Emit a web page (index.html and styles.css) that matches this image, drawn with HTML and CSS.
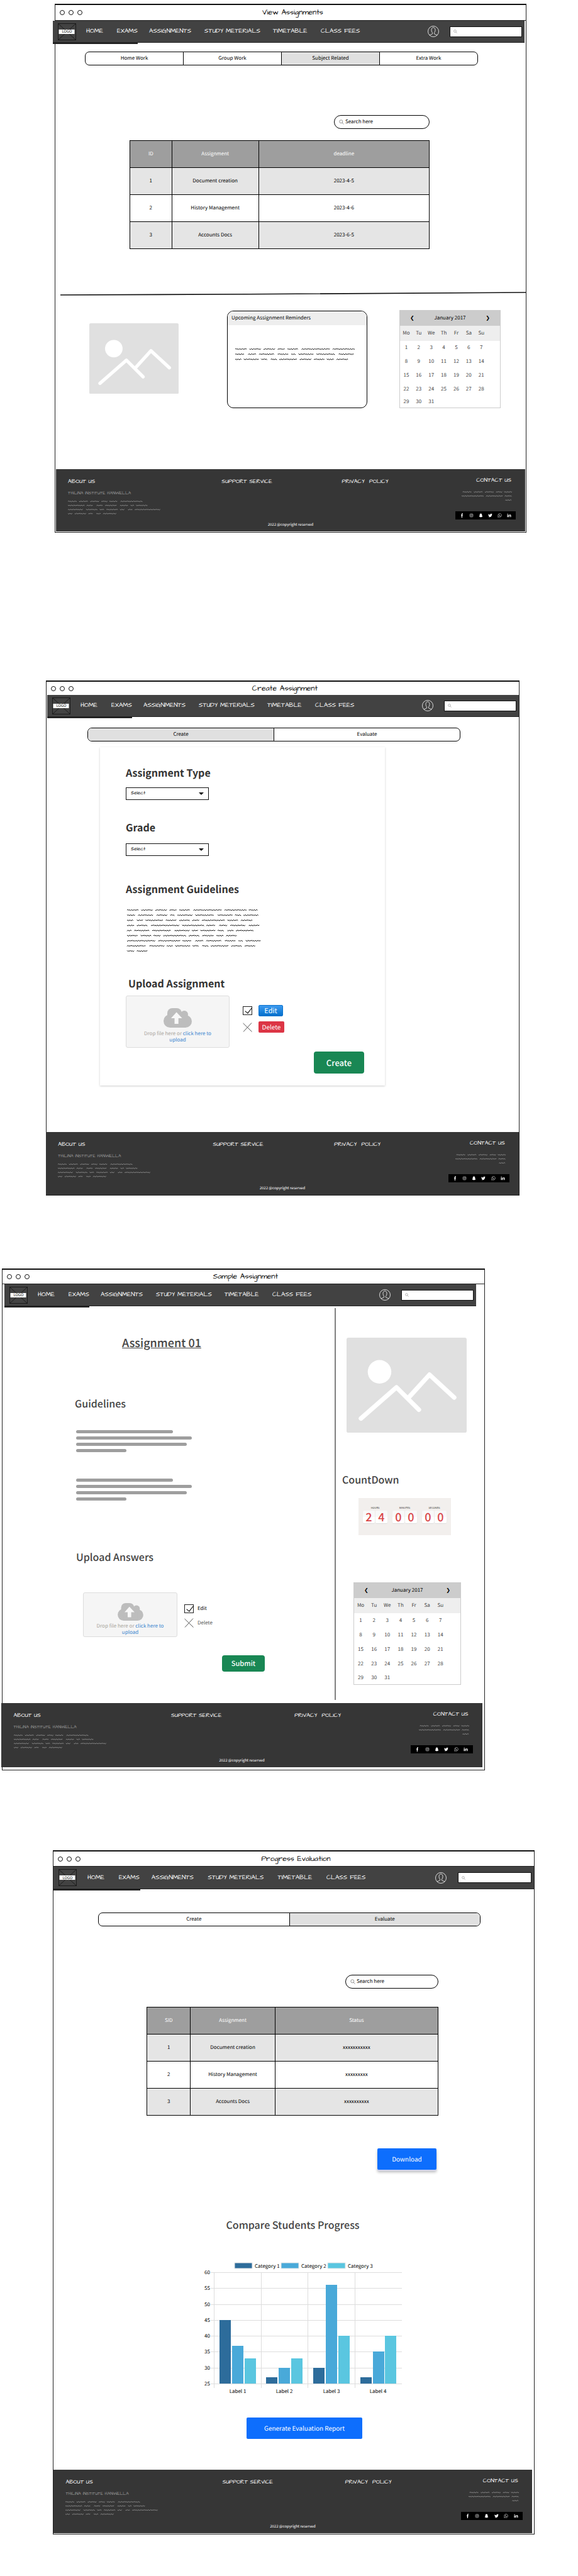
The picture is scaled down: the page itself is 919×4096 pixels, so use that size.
FILE: index.html
```html
<!DOCTYPE html>
<html lang="en">
<head>
<meta charset="utf-8">
<meta name="viewport" content="width=device-width, initial-scale=1">
<title>Assignments</title>
<link rel="stylesheet" href="styles.css">
</head>
<body>
<svg class="sprite" aria-hidden="true">
  <symbol id="i-search" viewBox="0 0 16 16"><circle cx="6.5" cy="6.5" r="5"/><path d="M10 10l5 5.5"/></symbol>
  <symbol id="i-user" viewBox="0 0 36 36"><circle cx="18" cy="18" r="17"/><path d="M6 30c3-3 9-2 9.500-6 0-2-3-4-3.500-9-.4-6 2-9.500 6-9.500s6.400 3.500 6 9.500c-.5 5-3.500 7-3.500 9 .5 4 6.500 3 9.500 6"/></symbol>
  <symbol id="i-photo" viewBox="0 0 510 404"><rect width="510" height="404" rx="8" fill="#e0e0e0"/><circle cx="140" cy="145" r="50" fill="#fff"/><path d="M61 343L212 211L307 306M263 255L352 157L457 254" fill="none" stroke="#fff" stroke-width="19" stroke-linecap="round" stroke-linejoin="round"/></symbol>
  <symbol id="i-cloud" viewBox="0 0 45 31"><g fill="#bdbdbd"><circle cx="10.500" cy="20.500" r="10.500"/><circle cx="35" cy="21" r="10"/><rect x="10" y="11" width="25" height="20"/><rect x="6" y="0" width="23" height="24" rx="8"/><circle cx="33" cy="10" r="6"/></g><path d="M20.600 6.500L29.600 16H23.700V25H17.500V16H12z" fill="#f8f8f8"/></symbol>
  <symbol id="i-logo" viewBox="0 0 29 27"><path d="M.5.5h28v26h-28zM.5.500l28 26M28.500.500l-28 26" fill="none" stroke="#111" stroke-width=".8"/><rect x="1.500" y="10" width="25" height="7" fill="#fff"/></symbol>
  <symbol id="i-cross" viewBox="0 0 15 15"><path d="M.5 1L14.500 14.500M14 .5L1 14.500"/></symbol>
  <symbol id="i-fb" viewBox="0 0 10 10"><path d="M4 10V5.500H2.800V3.800H4V2.500C4 1 4.700.2 6 .2h1.200v1.700h-.7c-.6 0-.7.3-.7.8v1.100h1.400L7 5.500H5.800V10z"/></symbol>
  <symbol id="i-ig" viewBox="0 0 10 10"><g fill="none" stroke="#fff" stroke-width=".8"><rect x="1.500" y="1.500" width="7" height="7" rx="1.800"/><circle cx="5" cy="5" r="1.700"/></g><circle cx="7.100" cy="3" r=".5"/></symbol>
  <symbol id="i-snap" viewBox="0 0 10 10"><path d="M5 .7c1.600 0 2.500 1 2.500 2.500v1.500l1 .3-.9.8c.3.800.8 1.300 1.600 1.600-.3.500-1 .5-1.300.7-.2.400-.5.400-1 .4-.6 0-1 .7-1.900.7s-1.300-.7-1.900-.7c-.5 0-.8 0-1-.4C1.800 7.900 1.100 7.900.8 7.400c.8-.3 1.300-.8 1.600-1.600L1.500 5l1-.3V3.200C2.500 1.700 3.400.7 5 .7z"/></symbol>
  <symbol id="i-tw" viewBox="0 0 10 10"><path d="M9.600 2.300l-1 1C8.700 6.700 6.200 9 3.400 9 2.200 9 1.200 8.700.4 8.200c1 .1 2-.2 2.700-.8-.8 0-1.500-.6-1.700-1.300h.8C1.300 5.800.6 5.100.6 4.100l.9.200C.6 3.700.4 2.600.9 1.700c1 1.200 2.400 1.900 4 2C4.600 2.300 5.600 1.200 6.900 1.200c.5 0 1 .2 1.400.6l1.200-.5-.8 1z"/></symbol>
  <symbol id="i-wa" viewBox="0 0 10 10"><path d="M1 9l.6-2.200A4 4 0 1 1 3.200 8.400z" fill="none" stroke="#fff" stroke-width=".8"/><path d="M3.600 2.900c-.8.8-.3 2 .8 3s2.200 1.300 2.800.4l-.9-.7-.5.4c-.6-.2-1.200-.8-1.400-1.400l.4-.4z"/></symbol>
  <symbol id="i-in" viewBox="0 0 10 10"><path d="M.7 3.500h1.800V9H.7zM3.600 3.500h1.700v.8C6.300 2.900 9.300 2.800 9.300 5.500V9H7.500V6C7.500 4.300 5.400 4.400 5.400 6v3H3.600z"/><circle cx="1.600" cy="1.900" r="1"/></symbol>
</svg>

<main>
<section class="screen screen-view">
  <header class="titlebar"><span class="dots"><i></i><i></i><i></i></span><h1>View Assignments</h1></header>
  <nav class="nav">
    <a class="logo" href="#"><svg><use href="#i-logo"/></svg><span>LOGO</span></a>
    <a href="#">HOME</a><a href="#">EXAMS</a><a href="#">ASSIGNMENTS</a><a href="#">STUDY METERIALS</a><a href="#">TIMETABLE</a><a href="#">CLASS FEES</a>
    <a class="user" href="#" aria-label="Profile"><svg><use href="#i-user"/></svg></a>
    <label class="nav-search"><svg><use href="#i-search"/></svg><input type="search" aria-label="Search site"></label>
  </nav>
  <div class="tabs"><button>Home Work</button><button>Group Work</button><button class="on">Subject Related</button><button>Extra Work</button></div>
  <label class="search"><svg><use href="#i-search"/></svg><input type="search" placeholder="Search here" aria-label="Search assignments"></label>
  <table class="data">
    <thead><tr><th>ID</th><th>Assignment</th><th>deadline</th></tr></thead>
    <tbody>
      <tr><td>1</td><td>Document creation</td><td>2023-4-5</td></tr>
      <tr><td>2</td><td>History Management</td><td>2023-4-6</td></tr>
      <tr><td>3</td><td>Accounts Docs</td><td>2023-6-5</td></tr>
    </tbody>
  </table>
  <svg class="rule" viewBox="0 0 741 6" preserveAspectRatio="none"><path d="M0 5L300 3.800L741 1" fill="none" stroke="#111" stroke-width="1.600"/></svg>
  <div class="trio">
    <svg class="photo" viewBox="0 0 510 404"><use href="#i-photo"/></svg>
    <article class="reminders">
      <h2>Upcoming Assignment Reminders</h2>
      <svg class="scribble" data-lines="19 19 19 12 17 | 46 35 / 15 | 14 24 | 18 8 25 30 | 24 / 10 24 10 | 10 29 19 17 12 19"></svg>
    </article>
    <table class="calendar">
      <thead>
        <tr class="month"><th colspan="8"><div><button aria-label="Previous month">❮</button><span>January 2017</span><button aria-label="Next month">❯</button></div></th></tr>
        <tr class="week"><th>Mo</th><th>Tu</th><th>We</th><th>Th</th><th>Fr</th><th>Sa</th><th>Su</th><th class="pad"></th></tr>
      </thead>
      <tbody>
        <tr><td>1</td><td>2</td><td>3</td><td>4</td><td>5</td><td>6</td><td>7</td></tr>
        <tr><td>8</td><td>9</td><td>10</td><td>11</td><td>12</td><td>13</td><td>14</td></tr>
        <tr><td>15</td><td>16</td><td>17</td><td>18</td><td>19</td><td>20</td><td>21</td></tr>
        <tr><td>22</td><td>23</td><td>24</td><td>25</td><td>26</td><td>27</td><td>28</td></tr>
        <tr><td>29</td><td>30</td><td>31</td></tr>
      </tbody>
    </table>
  </div>
  <footer class="footer">
    <div class="about"><h3>ABOUT US</h3><p>THILINA INSTITUTE HANWELLA</p><svg class="scribble small" data-lines="15 15 15 10 13 | 36 / 27 11 | 11 19 | 14 6 19 / 24 | 19 8 19 8 | 8 41 / 8 19 8 | 8 22"></svg></div>
    <a class="support" href="#">SUPPORT SERVICE</a>
    <a class="privacy" href="#">PRIVACY&nbsp; POLICY</a>
    <div class="contact"><h3>CONTACT US</h3><svg class="scribble small end" data-lines="15 15 15 10 13 / 36 27 12 / 11"></svg>
      <div class="social"><a href="#" aria-label="Facebook"><svg><use href="#i-fb"/></svg></a><a href="#" aria-label="Instagram"><svg><use href="#i-ig"/></svg></a><a href="#" aria-label="Snapchat"><svg><use href="#i-snap"/></svg></a><a href="#" aria-label="Twitter"><svg><use href="#i-tw"/></svg></a><a href="#" aria-label="WhatsApp"><svg><use href="#i-wa"/></svg></a><a href="#" aria-label="LinkedIn"><svg><use href="#i-in"/></svg></a></div></div>
    <small>2022 @copyright reserved</small>
  </footer>
</section>

<section class="screen screen-create">
  <header class="titlebar"><span class="dots"><i></i><i></i><i></i></span><h1>Create Assignment</h1></header>
  <nav class="nav">
    <a class="logo" href="#"><svg><use href="#i-logo"/></svg><span>LOGO</span></a>
    <a href="#">HOME</a><a href="#">EXAMS</a><a href="#">ASSIGNMENTS</a><a href="#">STUDY METERIALS</a><a href="#">TIMETABLE</a><a href="#">CLASS FEES</a>
    <a class="user" href="#" aria-label="Profile"><svg><use href="#i-user"/></svg></a>
    <label class="nav-search"><svg><use href="#i-search"/></svg><input type="search" aria-label="Search site"></label>
  </nav>
  <div class="tabs"><button class="on">Create</button><button>Evaluate</button></div>
  <form class="form-card">
    <label class="form-title" for="type">Assignment Type</label>
    <div class="select"><select id="type"><option>Select</option></select></div>
    <label class="form-title second" for="grade">Grade</label>
    <div class="select"><select id="grade"><option>Select</option></select></div>
    <h2 class="form-title third">Assignment Guidelines</h2>
    <svg class="scribble" data-lines="19 19 19 12 17 | 46 35 15 / 14 24 | 18 8 25 30 | 24 10 24 / 10 | 10 29 18 17 12 37 18 19 / 12 17 | 46 35 15 | 14 24 | 17 / 8 25 30 | 24 10 24 10 | 10 29 / 18 17 12 37 18 19 12 17 / 46 35 15 | 14 24 | 18 8 25 / 30 | 24 10 24 10 | 10 29 18 17 / 12 18"></svg>
    <h2 class="form-title fourth">Upload Assignment</h2>
    <div class="upload">
      <div class="drop"><svg><use href="#i-cloud"/></svg><p>Drop file here or <a href="#">click here to upload</a></p></div>
      <div class="upload-actions">
        <div><input type="checkbox" checked aria-label="Edit file"><button type="button" class="edit">Edit</button></div>
        <div><svg class="cross"><use href="#i-cross"/></svg><button type="button" class="delete">Delete</button></div>
      </div>
    </div>
    <button type="button" class="primary">Create</button>
  </form>
  <footer class="footer">
    <div class="about"><h3>ABOUT US</h3><p>THILINA INSTITUTE HANWELLA</p><svg class="scribble small" data-lines="15 15 15 10 13 | 36 / 27 11 | 11 19 | 14 6 19 / 24 | 19 8 19 8 | 8 41 / 8 19 8 | 8 22"></svg></div>
    <a class="support" href="#">SUPPORT SERVICE</a>
    <a class="privacy" href="#">PRIVACY&nbsp; POLICY</a>
    <div class="contact"><h3>CONTACT US</h3><svg class="scribble small end" data-lines="15 15 15 10 13 / 36 27 12 / 11"></svg>
      <div class="social"><a href="#" aria-label="Facebook"><svg><use href="#i-fb"/></svg></a><a href="#" aria-label="Instagram"><svg><use href="#i-ig"/></svg></a><a href="#" aria-label="Snapchat"><svg><use href="#i-snap"/></svg></a><a href="#" aria-label="Twitter"><svg><use href="#i-tw"/></svg></a><a href="#" aria-label="WhatsApp"><svg><use href="#i-wa"/></svg></a><a href="#" aria-label="LinkedIn"><svg><use href="#i-in"/></svg></a></div></div>
    <small>2022 @copyright reserved</small>
  </footer>
</section>

<section class="screen screen-sample">
  <header class="titlebar"><span class="dots"><i></i><i></i><i></i></span><h1>Sample Assignment</h1></header>
  <nav class="nav">
    <a class="logo" href="#"><svg><use href="#i-logo"/></svg><span>LOGO</span></a>
    <a href="#">HOME</a><a href="#">EXAMS</a><a href="#">ASSIGNMENTS</a><a href="#">STUDY METERIALS</a><a href="#">TIMETABLE</a><a href="#">CLASS FEES</a>
    <a class="user" href="#" aria-label="Profile"><svg><use href="#i-user"/></svg></a>
    <label class="nav-search"><svg><use href="#i-search"/></svg><input type="search" aria-label="Search site"></label>
  </nav>
  <div class="split">
    <div class="work">
      <h2 class="work-name">Assignment 01</h2>
      <h3 class="work-title">Guidelines</h3>
      <div class="bars"><i></i><i></i><i></i><i></i></div>
      <div class="bars"><i></i><i></i><i></i><i></i></div>
      <h3 class="work-title answers">Upload Answers</h3>
      <div class="upload">
        <div class="drop"><svg><use href="#i-cloud"/></svg><p>Drop file here or <a href="#">click here to upload</a></p></div>
        <div class="upload-actions plain">
          <label><input type="checkbox" checked>Edit</label>
          <button type="button"><svg class="cross"><use href="#i-cross"/></svg>Delete</button>
        </div>
      </div>
      <button type="button" class="primary">Submit</button>
    </div>
    <aside class="side">
      <svg class="photo" viewBox="0 0 510 404"><use href="#i-photo"/></svg>
      <h3 class="work-title">CountDown</h3>
      <div class="counter">
        <div><span>HOURS</span><b>2</b><b>4</b></div>
        <div><span>MINUTES</span><b>0</b><b>0</b></div>
        <div><span>SECONDS</span><b>0</b><b>0</b></div>
      </div>
      <table class="calendar">
        <thead>
          <tr class="month"><th colspan="8"><div><button aria-label="Previous month">❮</button><span>January 2017</span><button aria-label="Next month">❯</button></div></th></tr>
          <tr class="week"><th>Mo</th><th>Tu</th><th>We</th><th>Th</th><th>Fr</th><th>Sa</th><th>Su</th><th class="pad"></th></tr>
        </thead>
        <tbody>
          <tr><td>1</td><td>2</td><td>3</td><td>4</td><td>5</td><td>6</td><td>7</td></tr>
          <tr><td>8</td><td>9</td><td>10</td><td>11</td><td>12</td><td>13</td><td>14</td></tr>
          <tr><td>15</td><td>16</td><td>17</td><td>18</td><td>19</td><td>20</td><td>21</td></tr>
          <tr><td>22</td><td>23</td><td>24</td><td>25</td><td>26</td><td>27</td><td>28</td></tr>
          <tr><td>29</td><td>30</td><td>31</td></tr>
        </tbody>
      </table>
    </aside>
  </div>
  <footer class="footer">
    <div class="about"><h3>ABOUT US</h3><p>THILINA INSTITUTE HANWELLA</p><svg class="scribble small" data-lines="15 15 15 10 13 | 36 / 27 11 | 11 19 | 14 6 19 / 24 | 19 8 19 8 | 8 41 / 8 19 8 | 8 22"></svg></div>
    <a class="support" href="#">SUPPORT SERVICE</a>
    <a class="privacy" href="#">PRIVACY&nbsp; POLICY</a>
    <div class="contact"><h3>CONTACT US</h3><svg class="scribble small end" data-lines="15 15 15 10 13 / 36 27 12 / 11"></svg>
      <div class="social"><a href="#" aria-label="Facebook"><svg><use href="#i-fb"/></svg></a><a href="#" aria-label="Instagram"><svg><use href="#i-ig"/></svg></a><a href="#" aria-label="Snapchat"><svg><use href="#i-snap"/></svg></a><a href="#" aria-label="Twitter"><svg><use href="#i-tw"/></svg></a><a href="#" aria-label="WhatsApp"><svg><use href="#i-wa"/></svg></a><a href="#" aria-label="LinkedIn"><svg><use href="#i-in"/></svg></a></div></div>
    <small>2022 @copyright reserved</small>
  </footer>
</section>

<section class="screen screen-progress">
  <header class="titlebar"><span class="dots"><i></i><i></i><i></i></span><h1>Progress Evaluation</h1></header>
  <nav class="nav">
    <a class="logo" href="#"><svg><use href="#i-logo"/></svg><span>LOGO</span></a>
    <a href="#">HOME</a><a href="#">EXAMS</a><a href="#">ASSIGNMENTS</a><a href="#">STUDY METERIALS</a><a href="#">TIMETABLE</a><a href="#">CLASS FEES</a>
    <a class="user" href="#" aria-label="Profile"><svg><use href="#i-user"/></svg></a>
    <label class="nav-search"><svg><use href="#i-search"/></svg><input type="search" aria-label="Search site"></label>
  </nav>
  <div class="tabs"><button>Create</button><button class="on">Evaluate</button></div>
  <label class="search"><svg><use href="#i-search"/></svg><input type="search" placeholder="Search here" aria-label="Search progress"></label>
  <table class="data">
    <thead><tr><th>SID</th><th>Assignment</th><th>Status</th></tr></thead>
    <tbody>
      <tr><td>1</td><td>Document creation</td><td>xxxxxxxxxxx</td></tr>
      <tr><td>2</td><td>History Management</td><td>xxxxxxxxx</td></tr>
      <tr><td>3</td><td>Accounts Docs</td><td>xxxxxxxxxx</td></tr>
    </tbody>
  </table>
  <button class="download">Download</button>
  <h2 class="compare">Compare Students Progress</h2>
  <svg class="chart" viewBox="0 0 316 212" role="img" aria-label="Students progress by category">
    <g stroke="#e8e8e8"><rect x="49" y="2" width="28" height="9" fill="#2d6c9b"/><rect x="123" y="2" width="28" height="9" fill="#49a9d9"/><rect x="197" y="2" width="28" height="9" fill="#5ac6e0"/></g>
    <g class="legend"><text x="81" y="10">Category 1</text><text x="155" y="10">Category 2</text><text x="229" y="10">Category 3</text></g>
    <path d="M11 17.500H315M11 42.500H315M11 68.500H315M11 93.500H315M11 118.500H315M11 143.500H315M11 169.500H315M11 194.500H315M16.500 17V201M91.500 17V201M165.500 17V201M240.500 17V201" stroke="#ddd" fill="none"/>
    <g fill="#2d6c9b"><rect x="25" y="93" width="18" height="101"/><rect x="99" y="184" width="18" height="10"/><rect x="174" y="169" width="18" height="25"/><rect x="249" y="184" width="18" height="10"/></g>
    <g fill="#49a9d9"><rect x="45" y="134" width="18" height="60"/><rect x="119" y="169" width="18" height="25"/><rect x="194" y="37" width="18" height="157"/><rect x="269" y="143" width="18" height="51"/></g>
    <g fill="#5ac6e0"><rect x="65" y="154" width="18" height="40"/><rect x="139" y="154" width="18" height="40"/><rect x="214" y="118" width="18" height="76"/><rect x="288" y="118" width="18" height="76"/></g>
    <g class="ticks"><text x="10" y="20">60</text><text x="10" y="45">55</text><text x="10" y="71">50</text><text x="10" y="96">45</text><text x="10" y="121">40</text><text x="10" y="146">35</text><text x="10" y="172">30</text><text x="10" y="197">25</text></g>
    <g class="labels"><text x="54" y="209">Label 1</text><text x="128" y="209">Label 2</text><text x="203" y="209">Label 3</text><text x="277" y="209">Label 4</text></g>
  </svg>
  <button class="report">Generate Evaluation Report</button>
  <footer class="footer">
    <div class="about"><h3>ABOUT US</h3><p>THILINA INSTITUTE HANWELLA</p><svg class="scribble small" data-lines="15 15 15 10 13 | 36 / 27 11 | 11 19 | 14 6 19 / 24 | 19 8 19 8 | 8 41 / 8 19 8 | 8 22"></svg></div>
    <a class="support" href="#">SUPPORT SERVICE</a>
    <a class="privacy" href="#">PRIVACY&nbsp; POLICY</a>
    <div class="contact"><h3>CONTACT US</h3><svg class="scribble small end" data-lines="15 15 15 10 13 / 36 27 12 / 11"></svg>
      <div class="social"><a href="#" aria-label="Facebook"><svg><use href="#i-fb"/></svg></a><a href="#" aria-label="Instagram"><svg><use href="#i-ig"/></svg></a><a href="#" aria-label="Snapchat"><svg><use href="#i-snap"/></svg></a><a href="#" aria-label="Twitter"><svg><use href="#i-tw"/></svg></a><a href="#" aria-label="WhatsApp"><svg><use href="#i-wa"/></svg></a><a href="#" aria-label="LinkedIn"><svg><use href="#i-in"/></svg></a></div></div>
    <small>2022 @copyright reserved</small>
  </footer>
</section>
</main>
<script src="script.js"></script>
</body>
</html>
```
FILE: styles.css
```css
:root {
  --hand: "Architects Daughter", Lato, sans-serif;
  --body: "Noto Sans CJK SC", "Noto Sans", sans-serif;
  --dark: #424242;
}
* { box-sizing: border-box; }
body {
  margin: 0;
  padding: 6px 0 67px;
  background: #fff;
  color: #000;
  font: 8px/12px var(--body);
  text-rendering: geometricPrecision;
}
h1, h2, h3, p { margin: 0; font-weight: 400; }
a { color: inherit; text-decoration: none; }
button, input, select {
  margin: 0;
  padding: 0;
  border: 0;
  background: none;
  color: inherit;
  font: inherit;
  text-rendering: inherit;
}
svg { display: block; }
.sprite { position: absolute; width: 0; height: 0; }

/* Window frames */
.screen { border: 1px solid #222; border-top: 2px solid #111; }
.screen-view { margin: 0 82px 0 87px; padding-bottom: 1px; }
.screen-create { margin: 235px 93px 0 73px; }
.screen-sample { margin: 116px 148px 0 3px; padding-bottom: 4px; }
.screen-progress { margin: 127px 69px 0 84px; padding-bottom: 1px; }

.titlebar {
  display: grid;
  grid-template-columns: 60px 1fr 60px;
  align-items: center;
  height: 25px;
  padding-left: 7px;
  border-bottom: 1px solid #222;
}
.screen-create .titlebar { height: 21px; border: 0; }
.screen-sample .titlebar { height: 23px; }
.screen-progress .titlebar { height: 24px; }
.titlebar h1 { font: 12px/16px var(--hand); text-align: center; }
.dots { display: flex; gap: 6px; }
.dots i { width: 8px; height: 8px; border: 1px solid #111; border-radius: 50%; }

/* Navigation */
.nav {
  position: relative;
  display: grid;
  grid-template-columns: 53fr 49fr 51fr 88fr 109fr 76fr 170fr 35fr 115fr 4fr;
  align-items: center;
  height: 35px;
  background: var(--dark);
  border-bottom: 1px solid #222;
  color: #fff;
  font: 10px/12px var(--hand);
  white-space: nowrap;
}
.nav > * { min-width: 0; }
.nav::after {
  content: "";
  position: absolute;
  left: 0;
  top: 100%;
  width: 18%;
  height: 3px;
  background: #222;
}
.screen-view .nav { margin: 0 2px 0 -4px; }
.screen-create .nav { margin: 0 0 0 1px; }
.screen-sample .nav { margin: 0 13px 0 3px; }
.screen-progress .nav { height: 36px; }
.logo { display: grid; align-items: center; width: 29px; margin-left: 8px; }
.logo > * { grid-area: 1 / 1; }
.logo svg { width: 29px; height: 27px; }
.logo span { color: #111; font: 6px/8px var(--body); text-align: center; }
.user svg { width: 18px; height: 18px; fill: none; stroke: #fff; stroke-width: 1.6px; }
.nav-search {
  display: flex;
  align-items: center;
  height: 17px;
  padding-left: 5px;
  background: #fff;
  border: 1px solid #111;
}
.nav-search svg { flex: none; width: 6px; height: 6px; fill: none; stroke: #444; }
.nav-search input, .search input { flex: 1; min-width: 0; outline: 0; }

/* Segmented tabs */
.tabs {
  display: flex;
  height: 22px;
  border: 1px solid #000;
  border-radius: 7px;
  overflow: hidden;
}
.tabs button { flex: 1; }
.tabs button + button { border-left: 1px solid #000; }
.tabs .on { background: #e0e0e0; }
.screen-view .tabs { margin: 14px 76px 0 47px; }
.screen-create .tabs { margin: 17px 93px 0 65px; }
.screen-progress .tabs { margin: 37px 85px 0 71px; }

.search {
  display: flex;
  align-items: center;
  gap: 2px;
  width: 152px;
  height: 22px;
  margin: 79px 153px 0 auto;
  padding: 0 7px;
  border: 1px solid #000;
  border-radius: 11px;
}
.search svg { width: 8px; height: 8px; fill: none; stroke: #333; }
.search input::placeholder { color: #000; opacity: 1; }
.screen-progress .search { width: 148px; margin: 77px 152px 0 auto; }

/* Data tables */
.data {
  width: calc(100% - 271px);
  margin: 18px 153px 0 118px;
  border-collapse: collapse;
  table-layout: fixed;
}
.data th, .data td { height: 43px; border: 1px solid #000; padding: 0; text-align: center; font-weight: 400; }
.data th { background: #9e9e9e; color: #fff; }
.data th:first-child { width: 14%; }
.data th:nth-child(2) { width: 29%; }
.data tbody tr:nth-child(odd) { background: #e5e5e5; }
.screen-progress .data { width: calc(100% - 300px); margin: 29px 152px 0 148px; }
.screen-progress .data th:first-child { width: 15%; }

.rule { width: calc(100% - 8px); height: 6px; margin: 68px 0 0 8px; }

.trio {
  display: grid;
  grid-template-columns: 54fr 142fr 77fr 223fr 51fr 161fr 40fr;
  align-items: start;
  margin-top: 23px;
}
.trio .photo { grid-column: 2; width: 100%; margin-top: 21px; }
.reminders {
  grid-column: 4;
  height: 155px;
  margin-top: 1px;
  border: 1px solid #000;
  border-radius: 10px;
  overflow: hidden;
}
.reminders h2 { padding: 5px 6px; background: #eee; font-size: 8px; line-height: 12px; }
.reminders .scribble { margin: 34px 0 0 12px; }
.trio .calendar { grid-column: 6; }

/* Calendar */
.calendar {
  width: 100%;
  border: 1px solid #ccc;
  border-spacing: 0;
  table-layout: fixed;
  color: #444;
}
.calendar th, .calendar td { height: 22px; padding: 0; text-align: center; font-weight: 400; }
.calendar tbody tr:last-child td { height: 18px; }
.calendar .month th { height: 24px; background: #ccc; color: #000; }
.calendar .month div { display: flex; justify-content: space-between; padding: 0 16px; }
.calendar .week th { height: 24px; background: #eee; }
.calendar .week .pad { width: 5%; }
.side .calendar { width: calc(100% - 65px); margin: 75px 37px 0 28px; }
.side .calendar td { height: 23px; }
.side .calendar tbody tr:last-child td { height: 21px; }

/* Scribbled filler lines */
.scribble { fill: none; stroke: #111; stroke-width: 1px; stroke-linejoin: round; overflow: visible; }
.scribble.small { stroke: #aaa; stroke-width: .7px; }

/* Footer */
.footer {
  display: grid;
  grid-template-columns: 19fr 244fr 191fr 180fr 96fr 15fr;
  min-height: 99px;
  padding: 14px 0 7px;
  background: #363636;
  color: #fff;
  font: 9px/12px var(--hand);
  white-space: nowrap;
}
.footer > * { grid-row: 1; min-width: 0; }
.footer h3 { font-size: 9px; line-height: 12px; }
.about { grid-column: 2; }
.about p { margin: 7px 0 5px; color: #999; font-size: 7px; line-height: 10px; }
.support { grid-column: 3; }
.privacy { grid-column: 4; }
.contact { grid-column: 5; text-align: right; }
.contact h3 { margin: -2px 7px 9px 0; }
.contact .scribble { margin: 0 5px 0 auto; }
.social {
  display: flex;
  align-items: center;
  justify-content: space-around;
  height: 13px;
  margin-top: 15px;
  padding: 0 3px;
  background: #000;
}
.social svg { width: 7px; height: 7px; fill: #fff; }
.footer small { grid-column: 1 / -1; align-self: end; font: 6px/8px var(--body); text-align: center; }
.screen-view .footer { margin: 97px 1px 0; }
.screen-create .footer { margin: 74px 0 0 -1px; min-height: 100px; }
.screen-sample .footer { margin: 5px 3px 0 -2px; min-height: 102px; }
.screen-progress .footer { margin: 49px 3px 0 0; min-height: 101px; }

/* Create form */
.form-card {
  display: flex;
  flex-direction: column;
  align-items: flex-start;
  margin: 9px 213px 0 85px;
  padding: 30px 33px 19px 41px;
  box-shadow: 0 1px 3px #ccc;
}
.form-title { color: #333; font-size: 16px; font-weight: 700; line-height: 20px; }
.second { margin-top: 33px; }
.third { margin-top: 42px; }
.fourth { margin: 37px 0 10px 4px; }
.select {
  display: flex;
  align-items: center;
  width: 132px;
  height: 20px;
  margin-top: 14px;
  padding: 0 7px;
  border: 1px solid #111;
}
.select select { flex: 1; appearance: none; font: 8px/12px var(--hand); }
.select::after { content: ""; border: 4px solid transparent; border-top: 4px solid #111; border-bottom: 0; }
.second + .select { margin-top: 16px; }
.form-card .scribble { margin: 20px 0 0 2px; }
.form-card .primary { width: 80px; height: 35px; margin: 6px 0 0 auto; font-size: 13px; }

.upload { display: flex; gap: 21px; }
.drop {
  display: flex;
  flex-direction: column;
  align-items: center;
  width: 165px;
  height: 83px;
  padding: 19px 0 0;
  background: #f5f5f5;
  border: 1px solid #ddd;
  border-radius: 3px;
  color: #aaa69e;
  text-align: center;
}
.drop svg { width: 45px; height: 31px; }
.drop p { width: 126px; margin-top: 5px; font-size: 8px; line-height: 10px; }
.drop a { color: #3b86cf; }
.upload-actions { display: flex; flex-direction: column; gap: 8px; margin-top: 15px; }
.upload-actions > * { display: flex; align-items: center; gap: 10px; }
.upload-actions input {
  appearance: none;
  width: 15px;
  height: 14px;
  border: 1px solid #222;
}
.upload-actions input:checked::before {
  content: "";
  display: block;
  width: 5px;
  height: 10px;
  margin: -1px 0 0 5px;
  border: solid #000;
  border-width: 0 1px 1px 0;
  rotate: 38deg;
}
.cross { width: 15px; height: 15px; stroke: #555; fill: none; }
.edit, .delete { height: 18px; border-radius: 2px; color: #fff; }
.edit { width: 39px; border: 1px solid #0b72cc; background: linear-gradient(#3c9af0, #0470cc); font-size: 11px; line-height: 14px; }
.delete { width: 41px; background: #dc3545; font-size: 10px; }
.primary { border-radius: 4px; background: #198754; color: #fff; font-weight: 500; }

/* Sample assignment */
.split { display: grid; grid-template-columns: 530fr 236fr; margin-top: 3px; }
.work { padding: 43px 0 45px 115px; border-right: 2px solid #808080; }
.work-name {
  margin-right: 137px;
  color: #444;
  font-size: 18px;
  font-weight: 500;
  line-height: 24px;
  text-align: center;
  text-decoration: underline;
}
.work-title { color: #444; font-size: 16px; font-weight: 500; line-height: 20px; }
.work .work-title { margin-top: 74px; }
.work .answers { margin: 79px 0 0 2px; }
.bars { display: grid; gap: 5px; margin: 33px 0 0 2px; }
.bars + .bars { margin-top: 42px; }
.bars i { height: 5px; border-radius: 3px; background: #9e9e9e; }
.bars i:nth-child(1) { width: 154px; }
.bars i:nth-child(2) { width: 184px; }
.bars i:nth-child(3) { width: 176px; }
.bars i:nth-child(4) { width: 80px; }
.work .upload { gap: 11px; margin: 47px 0 0 13px; }
.work .drop { width: 150px; height: 71px; padding-top: 16px; }
.work .drop svg { height: 28px; }
.work .drop p { margin-top: 4px; }
.plain { margin-top: 19px; }
.plain > * { gap: 6px; }
.plain button { color: #555; }
.work .primary { display: block; width: 68px; height: 26px; margin: 29px 0 0 234px; font-size: 11px; }
.side { padding-top: 47px; }
.side .photo { width: calc(100% - 45px); margin-left: 17px; }
.side .work-title { margin: 64px 0 0 10px; }
.counter {
  display: flex;
  justify-content: space-between;
  height: 59px;
  margin: 20px 53px 0 36px;
  padding: 13px 7px 0;
  background: #f2efed;
}
.counter div { display: grid; grid-template-columns: 19px 19px; grid-template-rows: 7px 20px; column-gap: 1px; text-align: center; }
.counter span { grid-column: 1 / -1; font-size: 4px; line-height: 6px; color: #333; }
.counter b {
  border-radius: 2px;
  background: linear-gradient(#f8f8f8 50%, #fff 50%);
  box-shadow: 0 1px 1px #ddd;
  color: #d9464a;
  font-size: 18px;
  font-weight: 500;
  line-height: 20px;
}

/* Progress */
.download, .report { display: block; height: 34px; border-radius: 2px; background: #0d6efd; color: #fff; font-size: 10px; }
.download { width: 94px; margin: 52px 155px 0 auto; box-shadow: 0 2px 0 #d0d4ec, 0 4px 4px #bbb; }
.compare { margin: 77px 3px 0 0; color: #444; font-size: 16px; font-weight: 500; line-height: 20px; text-align: center; }
.chart { width: 316px; margin: 49px auto 0 239px; }
.chart text { font: 8px var(--body); }
.ticks { text-anchor: end; }
.labels { text-anchor: middle; }
.report { width: 184px; margin: 36px auto 0 307px; }
```
FILE: script.js
```js
// Draws filler copy as scribbled words. data-lines holds word widths:
// "/" starts a new line and "|" widens the gap after a sentence.
document.querySelectorAll('.scribble').forEach(function (svg) {
  var small = svg.classList.contains('small');
  var end = svg.classList.contains('end');
  var step = small ? 6.5 : 8.15;
  var gap = small ? 2.700 : 3.500;
  var amp = small ? 0.6 : 0.8;
  var peaks = [0, -1, 0.4, -0.6, 1, -0.9, 0.1, 0.8, -1.2, 0.5, -0.3];
  var lines = svg.dataset.lines.split('/').map(function (line) {
    var x = 0;
    var words = [];
    line.trim().split(/\s+/).forEach(function (token) {
      if (token === '|') { x += 2; return; }
      words.push([x, Number(token)]);
      x += Number(token) + gap;
    });
    return { words: words, width: x - gap };
  });
  var width = Math.max.apply(null, lines.map(function (l) { return l.width; }));
  var d = '';
  lines.forEach(function (line, row) {
    var shift = end ? width - line.width : 0;
    var y = row * step + step / 2;
    line.words.forEach(function (word, n) {
      for (var i = 0, x = 0; x <= word[1]; i += 1, x += 1.4) {
        d += (i ? 'L' : 'M') + (word[0] + x + shift).toFixed(1) + ' ' +
          (y + peaks[(i + n * 3 + row) % peaks.length] * amp).toFixed(1);
      }
    });
  });
  svg.setAttribute('width', Math.ceil(width));
  svg.setAttribute('height', Math.floor(lines.length * step));
  svg.innerHTML = '<path d="' + d + '"/>';
});
```
